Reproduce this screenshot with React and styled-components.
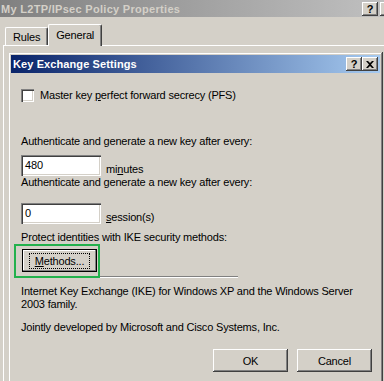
import React from 'react'
import styled, { createGlobalStyle } from 'styled-components'

const GlobalStyle = createGlobalStyle`
  html, body {
    margin: 0;
    padding: 0;
    width: 384px;
    height: 381px;
    overflow: hidden;
    background: #d4d0c8;
  }
  body {
    font-family: "Liberation Sans", Arial, sans-serif;
    font-size: 11px;
    letter-spacing: -0.18px;
    color: #000;
  }
`

const raised = `
  box-shadow: inset -1px -1px #404040, inset 1px 1px #ffffff,
    inset -2px -2px #808080, inset 2px 2px #d4d0c8;
`

const sunken = `
  box-shadow: inset 1px 1px #808080, inset 2px 2px #404040,
    inset -1px -1px #ffffff, inset -2px -2px #d4d0c8;
`

function CloseGlyph() {
  return (
    <svg width="8" height="7" viewBox="0 0 8 7">
      <path d="M0 0h2l2 2 2-2h2L5 3.5 8 7H6L4 5 2 7H0l3-3.5z" fill="#000" />
    </svg>
  )
}

function App() {
  return (
    <>
      <GlobalStyle />
      <Window>
        <OuterTitle>
          <TitleText muted>My L2TP/IPsec Policy Properties</TitleText>
          <TitleButtons edge>
            <TitleButton>?</TitleButton>
            <TitleButton><CloseGlyph /></TitleButton>
          </TitleButtons>
        </OuterTitle>

        <Tabs>
          <Tab>Rules</Tab>
          <Tab active>General</Tab>
        </Tabs>

        <Panel>
          <Dialog>
            <DialogTitle>
              <TitleText>Key Exchange Settings</TitleText>
              <TitleButtons>
                <TitleButton>?</TitleButton>
                <TitleButton><CloseGlyph /></TitleButton>
              </TitleButtons>
            </DialogTitle>

            <Content>
              <CheckRow>
                <CheckBox />
                <span>Master key <u>p</u>erfect forward secrecy (PFS)</span>
              </CheckRow>

              <Text top={33}>Authenticate and generate a new key after every:</Text>
              <FieldRow top={7}>
                <Input>480</Input>
                <Text>mi<u>n</u>utes</Text>
              </FieldRow>

              <Text>Authenticate and generate a new key after every:</Text>
              <FieldRow top={14}>
                <Input>0</Input>
                <Text><u>s</u>ession(s)</Text>
              </FieldRow>

              <Text top={7}>Protect identities with IKE security methods:</Text>
              <MethodsWrap>
                <Button focused>
                  <Focus><u>M</u>ethods...</Focus>
                </Button>
                <Highlight />
              </MethodsWrap>
              <Separator />

              <Text top={7}>
                Internet Key Exchange (IKE) for Windows XP and the Windows Server<br />
                2003 family.
              </Text>
              <Text top={10}>Jointly developed by Microsoft and Cisco Systems, Inc.</Text>

              <ButtonRow>
                <Button>OK</Button>
                <Button>Cancel</Button>
              </ButtonRow>
            </Content>
          </Dialog>
        </Panel>
      </Window>
    </>
  )
}

export default App

const Window = styled.div`
  width: 384px;
  height: 381px;
  display: flex;
  flex-direction: column;
  overflow: hidden;
  background: #d4d0c8;
`
const OuterTitle = styled.div`
  height: 17px;
  flex: none;
  display: flex;
  align-items: center;
  justify-content: space-between;
  padding-left: 1px;
  background: linear-gradient(to right, #808080, #c0c0c0);
`
const TitleText = styled.span`
  font-weight: bold;
  font-size: 11px;
  letter-spacing: ${props => props.muted ? '0.3px' : '0.1px'};
  color: ${props => props.muted ? '#d4d0c8' : '#ffffff'};
  white-space: nowrap;
`
const TitleButtons = styled.div`
  display: flex;
  gap: ${props => props.edge ? '2px' : '0'};
  margin-right: ${props => props.edge ? '-12px' : '2px'};
`
const TitleButton = styled.div`
  width: 16px;
  height: 14px;
  display: flex;
  align-items: center;
  justify-content: center;
  background: #d4d0c8;
  font-weight: bold;
  font-size: 11px;
  line-height: 14px;
  letter-spacing: 0;
  ${raised}
`
const Tabs = styled.div`
  height: 21px;
  flex: none;
  display: flex;
  align-items: flex-end;
  padding: 7px 0 0 5px;
  position: relative;
  z-index: 1;
`
const Tab = styled.div`
  height: ${props => props.active ? '22px' : '18px'};
  margin-bottom: ${props => props.active ? '-1px' : '0'};
  padding: 0 ${props => props.active ? '7px' : '7px'};
  display: flex;
  align-items: center;
  justify-content: center;
  box-sizing: border-box;
  background: #d4d0c8;
  border-top: 1px solid #ffffff;
  border-left: 1px solid #ffffff;
  border-right: 1px solid #404040;
  border-radius: 2px 2px 0 0;
  box-shadow: inset -1px 0 #808080;
  padding-bottom: ${props => props.active ? '2px' : '0'};
`
const Panel = styled.div`
  flex: 1;
  margin-left: 3px;
  border-top: 1px solid #ffffff;
  border-left: 1px solid #ffffff;
  position: relative;
`
const Dialog = styled.div`
  position: absolute;
  left: 4px;
  top: 6px;
  width: 375px;
  height: 360px;
  box-sizing: border-box;
  padding: 3px;
  background: #d4d0c8;
  box-shadow: inset -1px -1px #404040, inset 1px 1px #d4d0c8,
    inset -2px -2px #808080, inset 2px 2px #ffffff;
`
const DialogTitle = styled.div`
  height: 18px;
  display: flex;
  align-items: center;
  justify-content: space-between;
  padding-left: 2px;
  background: linear-gradient(to right, #0a246a, #a6caf0);
`
const Content = styled.div`
  display: flex;
  flex-direction: column;
  align-items: flex-start;
  padding: 16px 8px 0 10px;
`
const CheckRow = styled.div`
  display: flex;
  align-items: center;
  gap: 6px;
  height: 13px;
  line-height: 13px;
`
const CheckBox = styled.div`
  width: 13px;
  height: 13px;
  background: #ffffff;
  ${sunken}
`
const Text = styled.div`
  line-height: 13px;
  margin-top: ${props => props.top || 0}px;
  white-space: nowrap;
`
const FieldRow = styled.div`
  display: flex;
  align-items: flex-end;
  gap: 5px;
  margin-top: ${props => props.top || 0}px;
`
const Input = styled.div`
  width: 80px;
  height: 21px;
  box-sizing: border-box;
  padding: 4px 0 0 4px;
  line-height: 13px;
  background: #ffffff;
  ${sunken}
`
const MethodsWrap = styled.div`
  position: relative;
  margin: 5px 0 0 1px;
  display: flex;
`
const Button = styled.div`
  width: 75px;
  height: 23px;
  box-sizing: border-box;
  display: flex;
  align-items: center;
  justify-content: center;
  background: #d4d0c8;
  ${props => props.focused
    ? `border: 1px solid #000;
       box-shadow: inset -1px -1px #808080, inset 1px 1px #ffffff;`
    : raised}
`
const Focus = styled.span`
  border: 1px dotted #000;
  padding: 1px 4px;
  line-height: 12px;
  width: 61px;
  text-align: center;
  box-sizing: border-box;
`
const Highlight = styled.span`
  position: absolute;
  left: -8px;
  top: -5px;
  right: -3px;
  bottom: -6px;
  border: 2px solid #22b14c;
  z-index: 2;
`
const Separator = styled.div`
  width: 217px;
  height: 0;
  margin-top: 4px;
  border-top: 1px solid #808080;
  border-bottom: 1px solid #ffffff;
`
const ButtonRow = styled.div`
  align-self: stretch;
  display: flex;
  justify-content: flex-end;
  gap: 9px;
  margin-top: 15px;
`
